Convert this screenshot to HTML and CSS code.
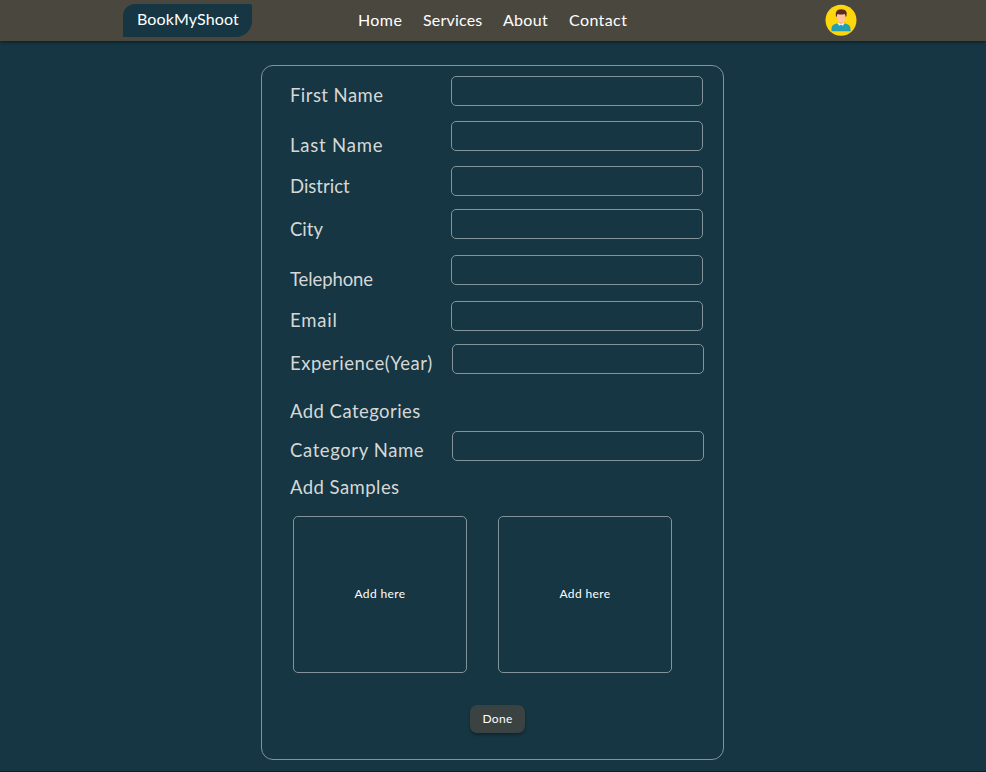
FILE: index.html
```html
<!DOCTYPE html>
<html lang="en">
<head>
<meta charset="utf-8">
<title>BookMyShoot</title>
<link rel="stylesheet" href="styles.css">
</head>
<body>
<header class="topbar">
  <a class="brand"><span>BookMyShoot</span></a>
  <nav class="nav">
    <a class="home">Home</a><a class="services">Services</a><a class="about">About</a><a class="contact">Contact</a>
  </nav>
  <svg class="avatar" viewBox="0 0 32 32">
    <circle cx="16" cy="16.300" r="15.500" fill="#fdd60b"/>
    <path d="M6.500 27.200v-2.500c0-3.200 2-4.700 5.200-5.300h8.600c3.200.6 5.200 2.100 5.200 5.300v2.500z" fill="#249fb0"/>
    <path d="M13.800 16h4.400v3.500L16 21l-2.200-1.500z" fill="#eeb18a"/>
    <path d="M12.500 19.300l1.300-.6L16 20.300l2.200-1.600 1.300.6-1.500 2.500-2-1-2 1z" fill="#e7f4f6"/>
    <ellipse cx="16.200" cy="13" rx="4.500" ry="5.400" fill="#ffc49b"/>
    <path d="M11.600 13.500C9.500 8.500 11.500 5.200 16.300 5.200s6.900 3.300 4.500 8.300c-.3-1-.4-2.300-.9-3.500-2.300.7-5 .7-7.400 0-.5 1.200-.6 2.500-.9 3.500z" fill="#5b2b25"/>
  </svg>
</header>
<main class="panel">
  <div class="row first"><label>First Name</label><input></div>
  <div class="row last"><label>Last Name</label><input></div>
  <div class="row district"><label>District</label><input></div>
  <div class="row city"><label>City</label><input></div>
  <div class="row phone"><label>Telephone</label><input></div>
  <div class="row email"><label>Email</label><input></div>
  <div class="row years"><label>Experience(Year)</label><input></div>
  <h2 class="categories">Add Categories</h2>
  <div class="row category"><label>Category Name</label><input></div>
  <h2 class="samples-title">Add Samples</h2>
  <div class="samples">
    <div class="sample"><span>Add here</span></div>
    <div class="sample"><span>Add here</span></div>
  </div>
  <button class="done">Done</button>
</main>
</body>
</html>
```
FILE: styles.css
```css
* { box-sizing: border-box; }
body {
  margin: 0;
  height: 772px;
  overflow: hidden;
  background: #153642;
  border-bottom: 1px solid #0b1f28;
  color: #fff;
  font-family: Lato, "Liberation Sans", sans-serif;
}
.topbar {
  display: flex;
  align-items: flex-start;
  height: 41px;
  background: #4a473e;
  box-shadow: 0 1px 3px rgba(0, 0, 0, .5);
}
.brand {
  width: 129px;
  height: 33px;
  margin: 4px 0 0 123px;
  padding-left: 14px;
  border-radius: 12px 2px 16px 0;
  background: #153642;
  font-size: 16px;
  line-height: 30px;
  letter-spacing: .12px;
}
.nav {
  display: flex;
  width: 467px;
  padding-left: 106px;
  font-size: 16px;
  line-height: 40px;
  letter-spacing: .4px;
  white-space: nowrap;
}
.home { width: 65px; }
.services { width: 80px; letter-spacing: .2px; }
.about { width: 66px; letter-spacing: .3px; }
.avatar { width: 32px; height: 32px; margin: 4px 0 0 106px; }
.panel {
  width: 463px;
  height: 695px;
  margin: 24px 0 0 261px;
  padding: 10px 0 0 28px;
  border: 1px solid #82949a;
  border-radius: 12px;
}
.row { display: flex; align-items: flex-start; height: 45px; }
.row label, h2 {
  width: 161px;
  margin: 0;
  color: #d6d8d7;
  font-size: 18.5px;
  font-weight: 400;
  line-height: 24px;
  letter-spacing: .45px;
  white-space: nowrap;
}
.row input {
  width: 252px;
  height: 30px;
  padding: 0 8px;
  border: 1px solid #82949a;
  border-radius: 5px;
  background: transparent;
  color: inherit;
  font: inherit;
}
.first label { margin-top: 7px; }
.last label { margin-top: 12px; letter-spacing: .8px; }
.district { height: 43px; }
.district label { margin-top: 8px; letter-spacing: 0; }
.city { height: 46px; }
.city label { margin-top: 8px; letter-spacing: 0; }
.phone { height: 46px; }
.phone label { margin-top: 12px; letter-spacing: -.1px; }
.email { height: 43px; }
.email label { margin-top: 7px; letter-spacing: .8px; }
.years { height: 55px; }
.years label { width: 162px; margin-top: 7px; letter-spacing: .5px; }
.categories { height: 32px; }
.category { height: 44px; }
.category label { width: 162px; margin-top: 7px; letter-spacing: .6px; }
.samples { display: flex; gap: 31px; margin: 17px 0 0 3px; }
.sample {
  display: flex;
  align-items: center;
  justify-content: center;
  width: 174px;
  height: 157px;
  padding-bottom: 3px;
  border: 1px solid #82949a;
  border-radius: 5px;
  font-size: 12px;
  letter-spacing: .4px;
}
.done {
  display: block;
  width: 55px;
  height: 28px;
  margin: 32px 0 0 180px;
  padding: 0 0 2px;
  border: 0;
  border-radius: 7px;
  background: #3b4242;
  box-shadow: 0 2px 3px rgba(0, 0, 0, .3);
  color: #fff;
  font: 12px Lato, sans-serif;
  letter-spacing: .3px;
}
```
